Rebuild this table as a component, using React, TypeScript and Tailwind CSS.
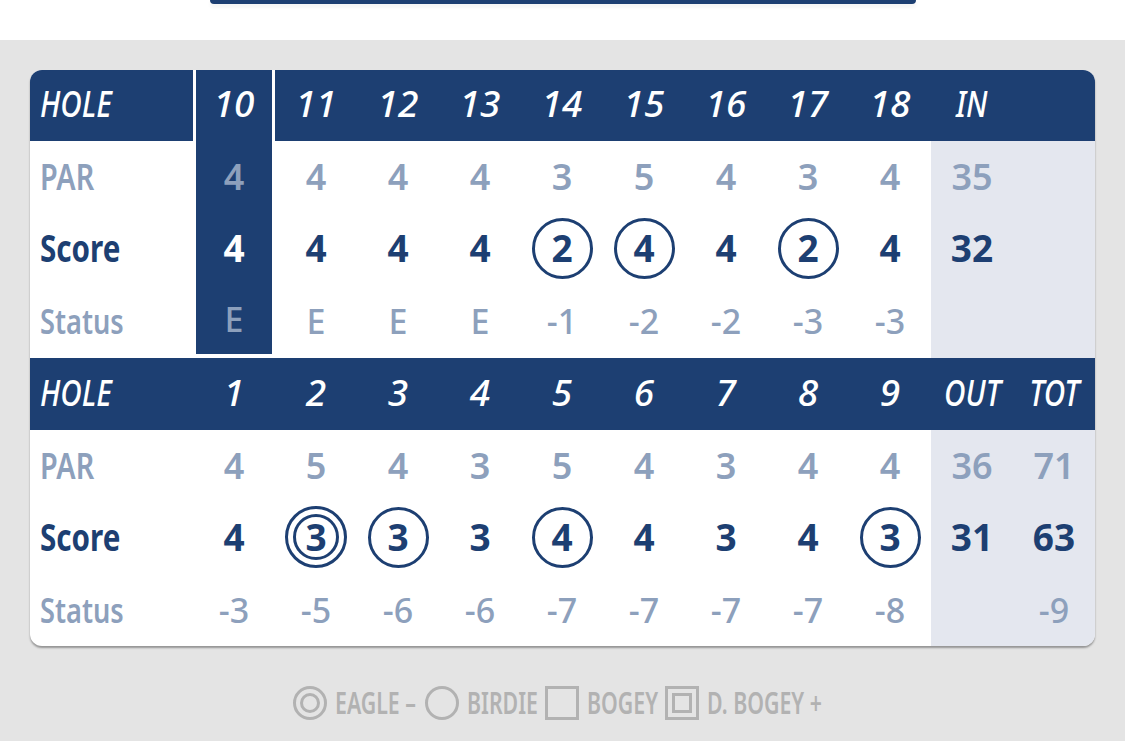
import React from 'react';

type Mark = 'eagle' | 'birdie' | null;

const front = {
  holes: ['10', '11', '12', '13', '14', '15', '16', '17', '18'],
  par: [4, 4, 4, 4, 3, 5, 4, 3, 4],
  score: [4, 4, 4, 4, 2, 4, 4, 2, 4],
  status: ['E', 'E', 'E', 'E', '-1', '-2', '-2', '-3', '-3'],
};

const back = {
  holes: ['1', '2', '3', '4', '5', '6', '7', '8', '9'],
  par: [4, 5, 4, 3, 5, 4, 3, 4, 4],
  score: [4, 3, 3, 3, 4, 4, 3, 4, 3],
  status: ['-3', '-5', '-6', '-6', '-7', '-7', '-7', '-7', '-8'],
};

function markFor(score: number, par: number): Mark {
  if (score - par <= -2) return 'eagle';
  if (score - par === -1) return 'birdie';
  return null;
}

// narrow the wide fallback font so words take the width of the condensed original
function Cond({ children, left }: { children: React.ReactNode; left?: boolean }) {
  return (
    <span className={`inline-block whitespace-nowrap scale-x-[0.8] ${left ? 'origin-left' : 'origin-center'}`}>
      {children}
    </span>
  );
}

function ScoreMark({ value, mark }: { value: number; mark: Mark }) {
  if (mark === 'birdie')
    return (
      <span className="flex h-[61px] w-[61px] items-center justify-center rounded-full border-[3px] border-[#1d3f72]">
        {value}
      </span>
    );
  if (mark === 'eagle')
    return (
      <span className="flex h-[62px] w-[62px] items-center justify-center rounded-full border-[3px] border-[#1d3f72]">
        <span className="flex h-[46px] w-[46px] items-center justify-center rounded-full border-[3px] border-[#1d3f72]">
          {value}
        </span>
      </span>
    );
  return <span>{value}</span>;
}

const row = 'grid grid-cols-[163px_repeat(11,82px)]';
const cell = 'flex items-center justify-center';
const head = 'flex items-center justify-center pb-[6px]';
const label = 'flex items-center pl-[10px]';
const sum = 'bg-[#e4e7ef]';
const hl = 'bg-[#1d3f72] border-x-[3px] border-white';
const headRow = `${row} bg-[#1d3f72] text-[37px] font-medium italic leading-none text-white`;

function LegendIcon({ kind }: { kind: 'eagle' | 'birdie' | 'bogey' | 'dbogey' }) {
  if (kind === 'eagle')
    return (
      <span className="flex h-[34px] w-[34px] items-center justify-center rounded-full border-[3px] border-[#b2b2b2]">
        <span className="h-[20px] w-[20px] rounded-full border-[3px] border-[#b2b2b2]" />
      </span>
    );
  if (kind === 'birdie') return <span className="h-[34px] w-[34px] rounded-full border-[3px] border-[#b2b2b2]" />;
  if (kind === 'bogey') return <span className="h-[34px] w-[34px] border-[3px] border-[#b2b2b2]" />;
  return (
    <span className="flex h-[34px] w-[34px] items-center justify-center border-[3px] border-[#b2b2b2]">
      <span className="h-[20px] w-[20px] border-[3px] border-[#b2b2b2]" />
    </span>
  );
}

function LegendText({ children, w }: { children: React.ReactNode; w: string }) {
  return (
    <span className={`${w} ml-[8px] mr-[10px]`}>
      <span className="inline-block origin-left scale-x-[0.71] whitespace-nowrap">{children}</span>
    </span>
  );
}

export default function App() {
  return (
    <div className="h-[741px] w-[1125px] overflow-hidden bg-[#e4e4e4] font-['Noto_Sans','DejaVu_Sans',sans-serif]">
      <div className="h-[40px] bg-white">
        <div className="mx-auto h-[4px] w-[706px] rounded-b-[5px] bg-[#1d3f72] shadow-[0_3px_4px_rgba(0,0,0,0.06)]" />
      </div>

      <div className="px-[30px] pt-[30px]">
        <div className="overflow-hidden rounded-[12px] bg-white shadow-[0_2px_2px_rgba(0,0,0,0.35)]">
          {/* 10-18 */}
          <div className={`${headRow} h-[71px]`}>
            <div className={`${label} pb-[6px]`}>
              <Cond left>HOLE</Cond>
            </div>
            {front.holes.map((h, i) => (
              <div key={h} className={`${head} ${i === 0 ? hl : ''}`}>
                {h}
              </div>
            ))}
            <div className={head}>
              <Cond>IN</Cond>
            </div>
            <div />
          </div>
          <div className={`${row} h-[72px] text-[36px] font-semibold text-[#8da0bc]`}>
            <div className={label}>
              <Cond left>PAR</Cond>
            </div>
            {front.par.map((p, i) => (
              <div key={i} className={`${cell} ${i === 0 ? hl : ''}`}>
                {p}
              </div>
            ))}
            <div className={`${cell} ${sum}`}>35</div>
            <div className={sum} />
          </div>
          <div className={`${row} h-[72px] text-[37px] font-bold text-[#1d3f72]`}>
            <div className={`${label} pb-[3px]`}>
              <Cond left>Score</Cond>
            </div>
            {front.score.map((s, i) => (
              <div key={i} className={`${cell} pb-[2px] ${i === 0 ? `${hl} text-white` : ''}`}>
                <ScoreMark value={s} mark={markFor(s, front.par[i])} />
              </div>
            ))}
            <div className={`${cell} ${sum} pb-[3px]`}>32</div>
            <div className={sum} />
          </div>
          <div className={`${row} h-[73px] text-[34px] font-medium text-[#8da0bc]`}>
            <div className={`${label} font-semibold`}>
              <Cond left>Status</Cond>
            </div>
            {front.status.map((s, i) => (
              <div key={i} className={`${cell} ${i === 0 ? `${hl} border-b-4` : ''}`}>
                {s}
              </div>
            ))}
            <div className={sum} />
            <div className={sum} />
          </div>

          {/* 1-9 */}
          <div className={`${headRow} h-[72px]`}>
            <div className={`${label} pb-[6px]`}>
              <Cond left>HOLE</Cond>
            </div>
            {back.holes.map((h) => (
              <div key={h} className={head}>
                {h}
              </div>
            ))}
            <div className={head}>
              <Cond>OUT</Cond>
            </div>
            <div className={head}>
              <Cond>TOT</Cond>
            </div>
          </div>
          <div className={`${row} h-[72px] text-[36px] font-semibold text-[#8da0bc]`}>
            <div className={label}>
              <Cond left>PAR</Cond>
            </div>
            {back.par.map((p, i) => (
              <div key={i} className={cell}>
                {p}
              </div>
            ))}
            <div className={`${cell} ${sum}`}>36</div>
            <div className={`${cell} ${sum}`}>71</div>
          </div>
          <div className={`${row} h-[72px] text-[37px] font-bold text-[#1d3f72]`}>
            <div className={`${label} pb-[3px]`}>
              <Cond left>Score</Cond>
            </div>
            {back.score.map((s, i) => (
              <div key={i} className={`${cell} pb-[2px]`}>
                <ScoreMark value={s} mark={markFor(s, back.par[i])} />
              </div>
            ))}
            <div className={`${cell} ${sum} pb-[3px]`}>31</div>
            <div className={`${cell} ${sum} pb-[3px]`}>63</div>
          </div>
          <div className={`${row} h-[72px] text-[34px] font-medium text-[#8da0bc]`}>
            <div className={`${label} font-semibold`}>
              <Cond left>Status</Cond>
            </div>
            {back.status.map((s, i) => (
              <div key={i} className={cell}>
                {s}
              </div>
            ))}
            <div className={sum} />
            <div className={`${cell} ${sum}`}>-9</div>
          </div>
        </div>

        <div className="mt-[39px] flex items-center justify-center text-[30px] font-semibold leading-[36px] text-[#b2b2b2]">
          <LegendIcon kind="eagle" />
          <LegendText w="w-[80px]">EAGLE –</LegendText>
          <LegendIcon kind="birdie" />
          <LegendText w="w-[68px]">BIRDIE</LegendText>
          <LegendIcon kind="bogey" />
          <LegendText w="w-[68px]">BOGEY</LegendText>
          <LegendIcon kind="dbogey" />
          <LegendText w="w-[116px]">D. BOGEY +</LegendText>
        </div>
      </div>
    </div>
  );
}
